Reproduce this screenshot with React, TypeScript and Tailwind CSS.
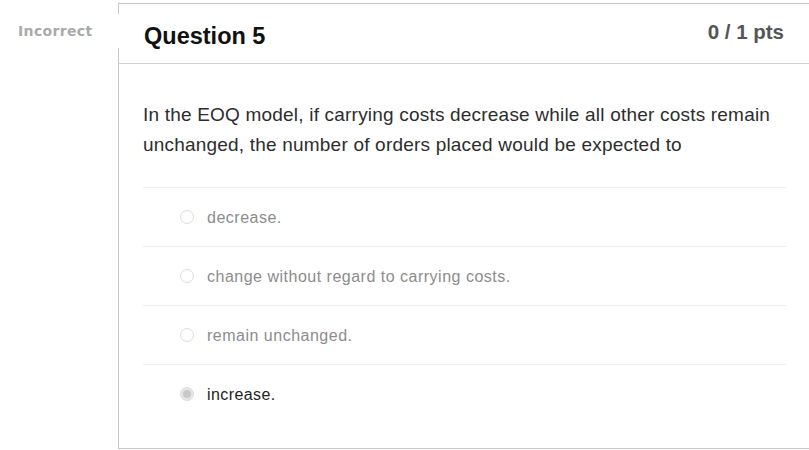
const answers = [
  { text: 'decrease.', picked: false },
  { text: 'change without regard to carrying costs.', picked: false },
  { text: 'remain unchanged.', picked: false },
  { text: 'increase.', picked: true },
];

export default function App() {
  return (
    <div className="w-[809px] h-[450px] bg-white overflow-hidden font-['Liberation_Sans',Arial,sans-serif]">
      <div className="flex pt-[3px]">
        {/* status label */}
        <div className="w-[118px] shrink-0 pl-[18px] pt-[16px]">
          <span className="font-['DejaVu_Sans',sans-serif] font-bold text-[14px] text-[#aaaaaa] tracking-[0.35px]">
            Incorrect
          </span>
        </div>

        <div className="relative flex-1 border-l border-t border-b border-[#c7c7c7] h-[446px]">
          <div className="absolute -left-px top-[10px] w-[2px] h-[34px] bg-white" />

          {/* header */}
          <div className="h-[60px] border-b border-[#d2d2d2] flex items-start justify-between pl-[25px] pr-[25px]">
            <h2 className="mt-[18px] text-[23.5px] leading-[28px] font-bold text-[#111]">Question 5</h2>
            <span className="mt-[16px] text-[20.5px] leading-[24px] font-bold text-[#555]">0 / 1 pts</span>
          </div>

          {/* body */}
          <div className="pl-[24px] pr-[23px] pt-[36px]">
            <p className="text-[19px] leading-[30px] tracking-[0.2px] text-[#2d2d2d] pb-[27px]">
              In the EOQ model, if carrying costs decrease while all other costs remain unchanged, the number of
              orders placed would be expected to
            </p>
            {answers.map((a) => (
              <div key={a.text} className="h-[59px] border-t border-[#eeeeee] flex items-center pl-[37px]">
                {a.picked ? (
                  <span className="w-[14px] h-[14px] rounded-full border border-[#dcdcdc] bg-[#e6e6e6] flex items-center justify-center">
                    <span className="w-[8px] h-[8px] rounded-full bg-[#c8c8c8]" />
                  </span>
                ) : (
                  <span className="w-[14px] h-[14px] rounded-full border border-[#dddddd] bg-white" />
                )}
                <span
                  className={`ml-[13px] text-[16px] mt-[2px] ${
                    a.picked ? 'text-[#222] tracking-[0.4px]' : 'text-[#8c8c8c] tracking-[0.5px]'
                  }`}
                >
                  {a.text}
                </span>
              </div>
            ))}
          </div>
        </div>
      </div>
    </div>
  );
}
